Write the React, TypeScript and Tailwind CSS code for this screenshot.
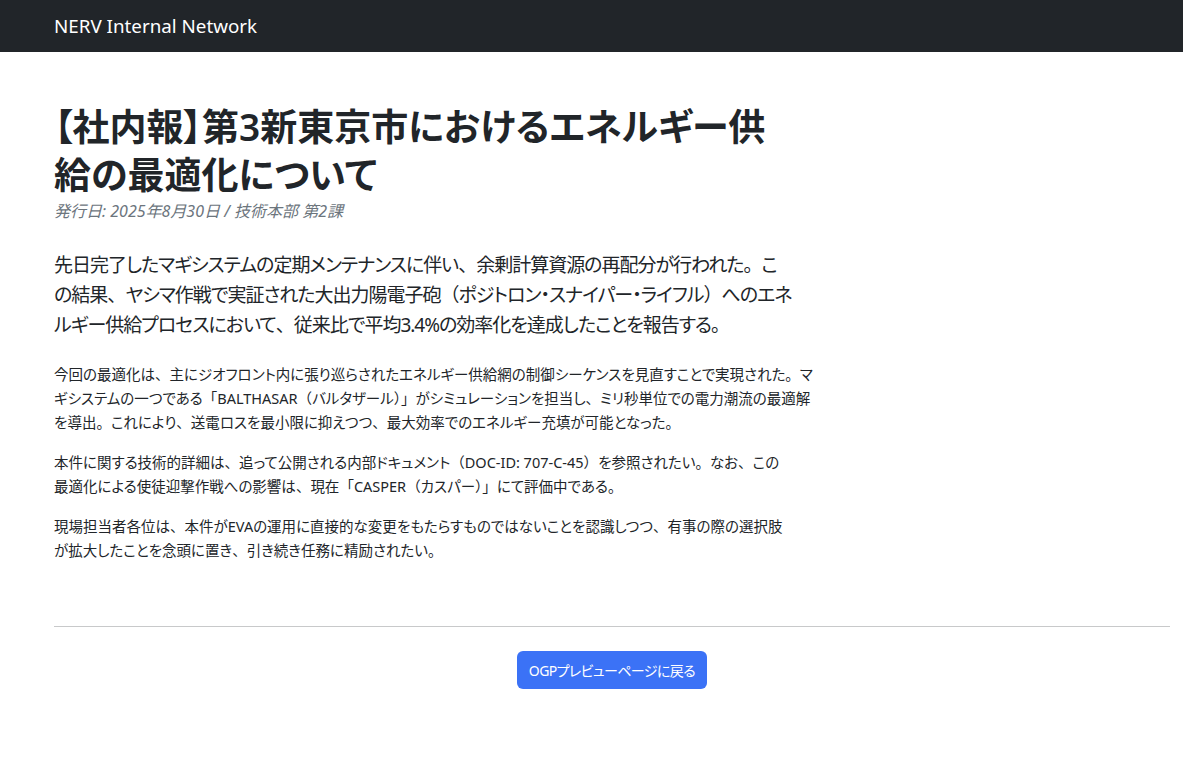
import React from "react";

const font = "[font-family:'Noto_Sans','Noto_Sans_CJK_JP',sans-serif]";
const PUNCT = "、。（）「」";

function J({ text }: { text: string }) {
  const parts: React.ReactNode[] = [];
  let buf = "";
  let k = 0;
  for (const ch of text) {
    if (PUNCT.includes(ch)) {
      if (buf) parts.push(buf);
      buf = "";
      parts.push(
        <span key={k++} className="[font-feature-settings:normal]">
          {ch}
        </span>
      );
    } else {
      buf += ch;
    }
  }
  if (buf) parts.push(buf);
  return <>{parts}</>;
}

function Lines({ lines }: { lines: string[] }) {
  return (
    <>
      {lines.map((l, i) => (
        <span key={i} className="block whitespace-nowrap">
          <J text={l} />
        </span>
      ))}
    </>
  );
}

export default function App() {
  return (
    <div className={`min-h-[783px] bg-white text-[#212529] ${font} [font-feature-settings:'palt']`}>
      <nav className="h-[52px] bg-[#212529] flex items-center px-[54px]">
        <span className="text-white text-[18.8px] leading-none">NERV Internal Network</span>
      </nav>
      <main className="pl-[54px] pr-[13px] pt-[51px]">
        <article className="max-w-[740px]">
          <h1 className="text-[37px] leading-[48px] font-semibold">
            <Lines lines={["【社内報】第3新東京市におけるエネルギー供", "給の最適化について"]} />
          </h1>
          <p className="mt-[2px] text-[16px] leading-[21px] italic text-[#6c757d]">
            発行日: 2025年8月30日 / 技術本部 第2課
          </p>
          <p className="mt-[28px] text-[19px] leading-[30px] tracking-[-1px]">
            <Lines
              lines={[
                "先日完了したマギシステムの定期メンテナンスに伴い、余剰計算資源の再配分が行われた。こ",
                "の結果、ヤシマ作戦で実証された大出力陽電子砲（ポジトロン・スナイパー・ライフル）へのエネ",
                "ルギー供給プロセスにおいて、従来比で平均3.4%の効率化を達成したことを報告する。",
              ]}
            />
          </p>
          <p className="mt-[22px] text-[14.5px] leading-[24px]">
            <Lines
              lines={[
                "今回の最適化は、主にジオフロント内に張り巡らされたエネルギー供給網の制御シーケンスを見直すことで実現された。マ",
                "ギシステムの一つである「BALTHASAR（バルタザール）」がシミュレーションを担当し、ミリ秒単位での電力潮流の最適解",
                "を導出。これにより、送電ロスを最小限に抑えつつ、最大効率でのエネルギー充填が可能となった。",
              ]}
            />
          </p>
          <p className="mt-[16px] text-[14.5px] leading-[24px]">
            <Lines
              lines={[
                "本件に関する技術的詳細は、追って公開される内部ドキュメント（DOC-ID: 707-C-45）を参照されたい。なお、この",
                "最適化による使徒迎撃作戦への影響は、現在「CASPER（カスパー）」にて評価中である。",
              ]}
            />
          </p>
          <p className="mt-[16px] text-[14.5px] leading-[24px]">
            <Lines
              lines={[
                "現場担当者各位は、本件がEVAの運用に直接的な変更をもたらすものではないことを認識しつつ、有事の際の選択肢",
                "が拡大したことを念頭に置き、引き続き任務に精励されたい。",
              ]}
            />
          </p>
        </article>
        <hr className="mt-[64px] border-t border-[#c8c9ca]" />
        <div className="flex justify-center pt-[24px]">
          <button className="h-[38px] px-[12px] rounded-[6px] bg-[#3b72f6] text-white text-[14px] tracking-[-0.6px]">
            OGPプレビューページに戻る
          </button>
        </div>
      </main>
    </div>
  );
}
